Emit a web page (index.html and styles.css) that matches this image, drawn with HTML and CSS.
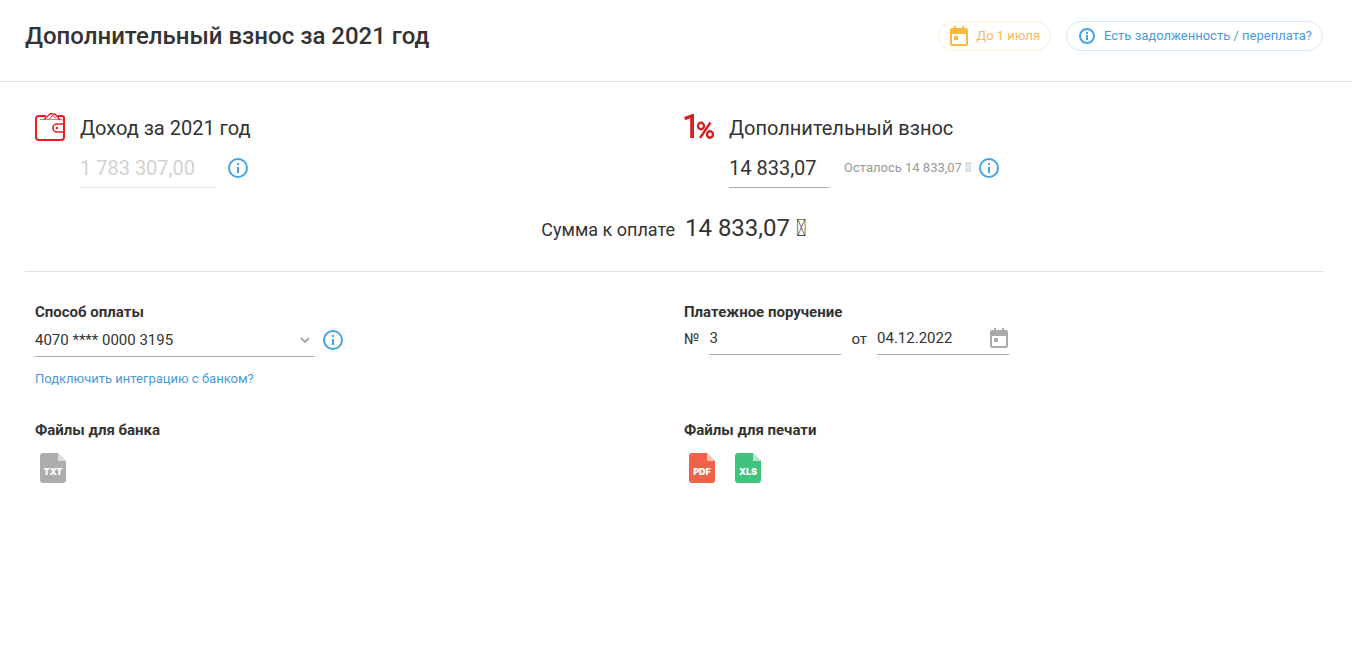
FILE: index.html
```html
<!DOCTYPE html>
<html lang="ru">
<head>
<meta charset="utf-8">
<meta name="viewport" content="width=device-width, initial-scale=1">
<title>Дополнительный взнос за 2021 год</title>
<link rel="stylesheet" href="styles.css">
</head>
<body>
<svg class="sprite" aria-hidden="true">
  <symbol id="info" viewBox="0 0 20 20">
    <circle cx="10" cy="10" r="9" fill="none" stroke="currentColor" stroke-width="2"/>
    <path d="M9 5h2v2H9zM9 9h2v6H9z" fill="currentColor"/>
  </symbol>
  <symbol id="info-small" viewBox="0 0 16 16">
    <circle cx="8" cy="8" r="7" fill="none" stroke="currentColor" stroke-width="2"/>
    <path d="M7 4h2v2H7zM7 7h2v5H7z" fill="currentColor"/>
  </symbol>
  <symbol id="calendar" viewBox="0 0 18 20">
    <path d="M4 0h2v2h6V0h2v2h2a2 2 0 0 1 2 2v14a2 2 0 0 1-2 2H2a2 2 0 0 1-2-2V4a2 2 0 0 1 2-2h2zM2 8v10h14V8z" fill="currentColor" fill-rule="evenodd"/>
    <path d="M4 10h4v4H4z" fill="currentColor"/>
  </symbol>
  <symbol id="file" viewBox="0 0 26 30">
    <path d="M3 0h15l8 8v19a3 3 0 0 1-3 3H3a3 3 0 0 1-3-3V3a3 3 0 0 1 3-3z" fill="currentColor"/>
    <path d="M18 0l8 8h-8z" fill="#fff" opacity=".6"/>
  </symbol>
</svg>

<header class="header">
  <h1 class="title">Дополнительный взнос за 2021 год</h1>
  <div class="chips">
    <span class="chip chip-due"><svg class="chip-calendar"><use href="#calendar"/></svg>До 1 июля</span>
    <button type="button" class="chip chip-debt"><svg class="chip-info"><use href="#info-small"/></svg>Есть задолженность / переплата?</button>
  </div>
</header>

<main class="content">
  <section class="amounts">
    <div class="columns">
      <div class="amount">
        <svg class="amount-icon" viewBox="0 0 30 30" fill="none" stroke="#ee1c25" aria-hidden="true">
          <path d="M11 4H4a3 3 0 0 0-3 3v18a3 3 0 0 0 3 3h22a3 3 0 0 0 3-3V6a2 2 0 0 0-2-2h-4" stroke-width="2"/>
          <path d="M5 7.500h22l2 2" stroke-width="1" opacity=".6"/>
          <path d="M9 7.500L15.500 1.500l5 1L25 8" stroke-width="1.500"/>
          <path d="M14 7l4-3.500 3 3" stroke-width="1"/>
          <path d="M29 12h-7a4 4 0 0 0 0 8h7" stroke-width="1.600"/>
          <circle cx="22" cy="16" r="1.200" fill="#ee1c25" stroke="none"/>
        </svg>
        <div class="amount-body">
          <label class="amount-label" for="income">Доход за 2021 год</label>
          <div class="amount-row">
            <input id="income" class="input amount-input income" type="text" value="1 783 307,00" disabled>
            <button type="button" class="info-button" aria-label="О доходе"><svg class="info"><use href="#info"/></svg></button>
          </div>
        </div>
      </div>
      <div class="amount">
        <svg class="amount-icon" viewBox="0 0 30 30" aria-hidden="true">
          <path d="M8.500 2h1.500v24H6.200V6.300L1.200 8.200 0 5z" fill="#d92020"/>
          <g fill="none" stroke="#d92020">
            <path d="M26.500 10.500L16 26" stroke-width="2.400"/>
            <ellipse cx="17" cy="14" rx="3" ry="3.200" stroke-width="2.400"/>
            <ellipse cx="26" cy="22.500" rx="3" ry="3.200" stroke-width="2.400"/>
          </g>
        </svg>
        <div class="amount-body">
          <label class="amount-label" for="fee">Дополнительный взнос</label>
          <div class="amount-row">
            <input id="fee" class="input amount-input fee" type="text" value="14 833,07">
            <span class="left">Осталось 14 833,07 &#xE000;</span>
            <button type="button" class="info-button fee-info" aria-label="О взносе"><svg class="info"><use href="#info"/></svg></button>
          </div>
        </div>
      </div>
    </div>
    <p class="total"><span class="total-label">Сумма к оплате</span> <span class="total-value">14 833,07 &#xE000;</span></p>
  </section>

  <section class="columns details">
    <div class="cell">
      <label class="caption" for="account">Способ оплаты</label>
      <div class="account-row">
        <div class="select-box">
          <select id="account" class="input select"><option>4070 **** 0000 3195</option></select>
          <svg class="chevron" viewBox="0 0 10 7" aria-hidden="true"><path d="M1 1l4 4 4-4" fill="none" stroke="#aaa" stroke-width="2"/></svg>
        </div>
        <button type="button" class="info-button" aria-label="О способе оплаты"><svg class="info"><use href="#info"/></svg></button>
      </div>
      <a class="link" href="#bank">Подключить интеграцию с банком?</a>
    </div>
    <div class="cell">
      <h2 class="caption">Платежное поручение</h2>
      <div class="order-row">
        <label for="number">№</label>
        <input id="number" class="input order-input" type="text" value="3">
        <label for="date">от</label>
        <div class="date-box">
          <input id="date" class="input order-input" type="text" value="04.12.2022">
          <button type="button" class="date-button" aria-label="Выбрать дату"><svg class="calendar"><use href="#calendar"/></svg></button>
        </div>
      </div>
    </div>
    <div class="cell">
      <h2 class="caption">Файлы для банка</h2>
      <div class="files">
        <button type="button" class="file txt"><svg class="file-shape"><use href="#file"/></svg><span class="file-name">TXT</span></button>
      </div>
    </div>
    <div class="cell">
      <h2 class="caption">Файлы для печати</h2>
      <div class="files">
        <button type="button" class="file pdf"><svg class="file-shape"><use href="#file"/></svg><span class="file-name">PDF</span></button>
        <button type="button" class="file xls"><svg class="file-shape"><use href="#file"/></svg><span class="file-name">XLS</span></button>
      </div>
    </div>
  </section>
</main>
</body>
</html>
```

FILE: styles.css
```css
* {
  box-sizing: border-box;
}

body {
  margin: 0;
  background: #fff;
  color: #333;
  font: 15px/20px Roboto, "Liberation Sans", sans-serif;
}

h1, h2, p {
  margin: 0;
}

button, input, select {
  margin: 0;
  padding: 0;
  border: 0;
  border-radius: 0;
  background: none;
  color: inherit;
  font: inherit;
}

button {
  cursor: pointer;
}

svg {
  display: block;
  flex: none;
}

.sprite {
  display: none;
}

/* Header */
.header {
  display: flex;
  align-items: flex-start;
  justify-content: space-between;
  padding: 21px 29px 30px 25px;
  border-bottom: 1px solid #e0e0e0;
}

.title {
  font-size: 24px;
  line-height: 30px;
  font-weight: 500;
}

.chips {
  display: flex;
  gap: 15px;
}

.chip {
  display: flex;
  align-items: center;
  height: 30px;
  padding: 0 10px;
  border: 1px solid;
  border-radius: 15px;
  font-size: 13px;
  white-space: nowrap;
}

.chip-due {
  gap: 7px;
  border-color: #feefd3;
  color: #f8b85c;
}

.chip-calendar {
  width: 20px;
  height: 20px;
  color: #fbb93b;
}

.chip-debt {
  gap: 9px;
  padding-left: 12px;
  border-color: #d3e9f8;
  color: #4a9bdc;
}

.chip-info {
  width: 16px;
  height: 16px;
  color: #41a5e1;
}

/* Amounts */
.content {
  padding: 0 29px 40px 25px;
}

.columns {
  display: grid;
  grid-template-columns: 1fr 1fr;
}

.amounts {
  padding: 30px 0 26px;
  border-bottom: 1px solid #e0e0e0;
}

.amount {
  display: flex;
  gap: 15px;
  padding-left: 10px;
}

.amount-icon {
  width: 30px;
  height: 30px;
}

.amount-label {
  display: block;
  font-size: 20px;
  line-height: 32px;
}

.amount-row {
  display: flex;
  align-items: center;
  padding-top: 4px;
}

.input {
  border-bottom: 1px solid #aaa;
  outline: none;
}

.amount-input {
  height: 40px;
  font-size: 20px;
}

.income {
  width: 135px;
  margin-right: 13px;
  border-color: #e6e6e6;
  color: #d2d2d2;
}

.fee {
  width: 100px;
  margin-right: 15px;
}

.left {
  color: #999;
  font-size: 13px;
}

.info-button {
  color: #41a5e1;
}

.fee-info {
  margin-left: 8px;
}

.info {
  width: 20px;
  height: 20px;
}

.total {
  display: flex;
  align-items: baseline;
  justify-content: center;
  gap: 10px;
  padding-top: 25px;
  line-height: 30px;
}

.total-label {
  font-size: 18px;
}

.total-value {
  font-size: 24px;
}

/* Payment details */
.details {
  row-gap: 31px;
  padding-top: 30px;
}

.cell {
  padding-left: 10px;
}

.caption {
  display: block;
  font-size: 15px;
  line-height: 20px;
  font-weight: 700;
}

.account-row {
  display: flex;
  align-items: center;
  gap: 8px;
}

.select-box {
  position: relative;
  width: 280px;
}

.select {
  width: 100%;
  height: 35px;
  padding-top: 2px;
  appearance: none;
}

.chevron {
  position: absolute;
  top: 15px;
  right: 5px;
  width: 10px;
  height: 7px;
  pointer-events: none;
}

.link {
  display: block;
  margin-top: 12px;
  color: #4a9bdc;
  font-size: 13px;
  text-decoration: none;
}

.order-row {
  display: flex;
  align-items: center;
  gap: 10px;
}

.order-input {
  width: 132px;
  height: 33px;
}

.date-box {
  position: relative;
}

.date-button {
  position: absolute;
  top: 6px;
  right: 0;
  color: #aaa;
}

.calendar {
  width: 20px;
  height: 20px;
}

.files {
  display: flex;
  gap: 20px;
  padding: 13px 5px 0;
}

.file {
  position: relative;
  width: 26px;
  height: 30px;
}

.file-shape {
  width: 26px;
  height: 30px;
}

.file-name {
  position: absolute;
  inset: 10px 0 auto;
  color: #fff;
  font-family: Inter, Roboto, sans-serif;
  font-size: 9px;
  font-weight: 900;
  line-height: 18px;
  text-align: center;
}

.txt {
  color: #adadad;
}

.pdf {
  color: #f0614a;
}

.xls {
  color: #41c37e;
}
```
